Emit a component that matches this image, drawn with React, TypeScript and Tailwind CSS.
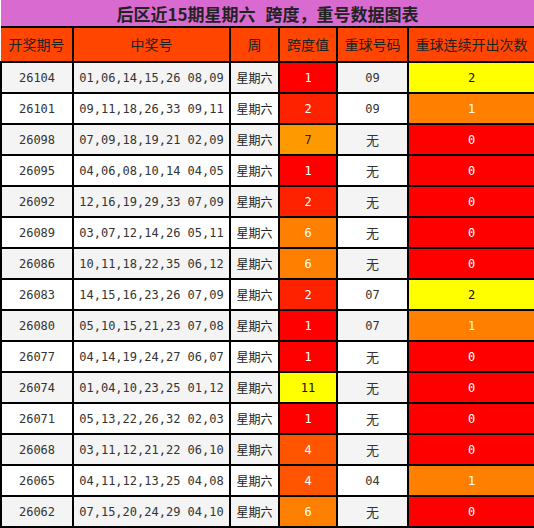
import React from 'react'

type Row = [string, string, number, string, number]

const ROWS: Row[] = [
  ['26104', '01,06,14,15,26 08,09', 1, '09', 2],
  ['26101', '09,11,18,26,33 09,11', 2, '09', 1],
  ['26098', '07,09,18,19,21 02,09', 7, '无', 0],
  ['26095', '04,06,08,10,14 04,05', 1, '无', 0],
  ['26092', '12,16,19,29,33 07,09', 2, '无', 0],
  ['26089', '03,07,12,14,26 05,11', 6, '无', 0],
  ['26086', '10,11,18,22,35 06,12', 6, '无', 0],
  ['26083', '14,15,16,23,26 07,09', 2, '07', 2],
  ['26080', '05,10,15,21,23 07,08', 1, '07', 1],
  ['26077', '04,14,19,24,27 06,07', 1, '无', 0],
  ['26074', '01,04,10,23,25 01,12', 11, '无', 0],
  ['26071', '05,13,22,26,32 02,03', 1, '无', 0],
  ['26068', '03,11,12,21,22 06,10', 4, '无', 0],
  ['26065', '04,11,12,13,25 04,08', 4, '04', 1],
  ['26062', '07,15,20,24,29 04,10', 6, '无', 0],
]

function spanCls(v: number) {
  if (v === 1) return 'bg-[#ff0000] text-white'
  if (v === 2) return 'bg-[#ff2200] text-white'
  if (v === 4) return 'bg-[#ff5500] text-white'
  if (v === 6) return 'bg-[#ff8000] text-white'
  if (v === 7) return 'bg-[#ff9900] text-[#222]'
  return 'bg-[#ffff00] text-[#111]'
}

function countCls(v: number) {
  if (v === 0) return 'bg-[#ff0000] text-white'
  if (v === 1) return 'bg-[#ff8000] text-white'
  return 'bg-[#ffff00] text-[#111]'
}

const HEAD = ['开奖期号', '中奖号', '周', '跨度值', '重球号码', '重球连续开出次数']
const WIDTHS = ['w-[72px]', 'w-[157px]', 'w-[49px]', 'w-[58px]', 'w-[71px]', 'w-[127px]']

export default function App() {
  return (
    <div className="w-[534px] h-[528px] bg-white overflow-hidden font-['DejaVu_Sans_Mono','Noto_Sans_CJK_SC',monospace]">
      <table className="w-[534px] table-fixed border-collapse text-[#333]">
        <colgroup>
          {WIDTHS.map((w, i) => <col key={i} className={w} />)}
        </colgroup>
        <thead>
          <tr>
            <th colSpan={6}
              className="h-[27px] p-0 bg-[#d96ad0] border-2 border-black border-t-0 border-l-0 text-[#222] text-[17px] font-bold leading-none font-['Noto_Sans_CJK_SC',sans-serif]">
              后区近15期星期六<span className="ml-[10px]">跨度，重号数据图表</span>
            </th>
          </tr>
          <tr>
            {HEAD.map(h => (
              <th key={h}
                className="h-[35px] p-0 bg-[#ff4500] border-2 border-black text-[14px] font-normal text-[#222] font-['Noto_Sans_CJK_SC',sans-serif] whitespace-nowrap first:border-l-0">
                {h}
              </th>
            ))}
          </tr>
        </thead>
        <tbody>
          {ROWS.map(([no, nums, span, red, cnt], i) => {
            const bg = i % 2 === 0 ? 'bg-[#f4f4f4]' : 'bg-white'
            return (
              <tr key={no} className="text-[12px] text-center">
                <td className={`h-[31px] p-0 border-2 border-black ${bg}`}>{no}</td>
                <td className={`p-0 border-2 border-black whitespace-nowrap ${bg}`}>{nums}</td>
                <td className={`p-0 border-2 border-black font-['Noto_Sans_CJK_SC',sans-serif] text-[#222] ${bg}`}>星期六</td>
                <td className={`p-0 border-2 border-black ${spanCls(span)}`}>{span}</td>
                <td className={`p-0 border-2 border-black ${bg} ${red === '无' ? "text-[13px] font-['Noto_Sans_CJK_SC',sans-serif]" : ''}`}>{red}</td>
                <td className={`p-0 border-2 border-black ${countCls(cnt)}`}>{cnt}</td>
              </tr>
            )
          })}
        </tbody>
      </table>
    </div>
  )
}
